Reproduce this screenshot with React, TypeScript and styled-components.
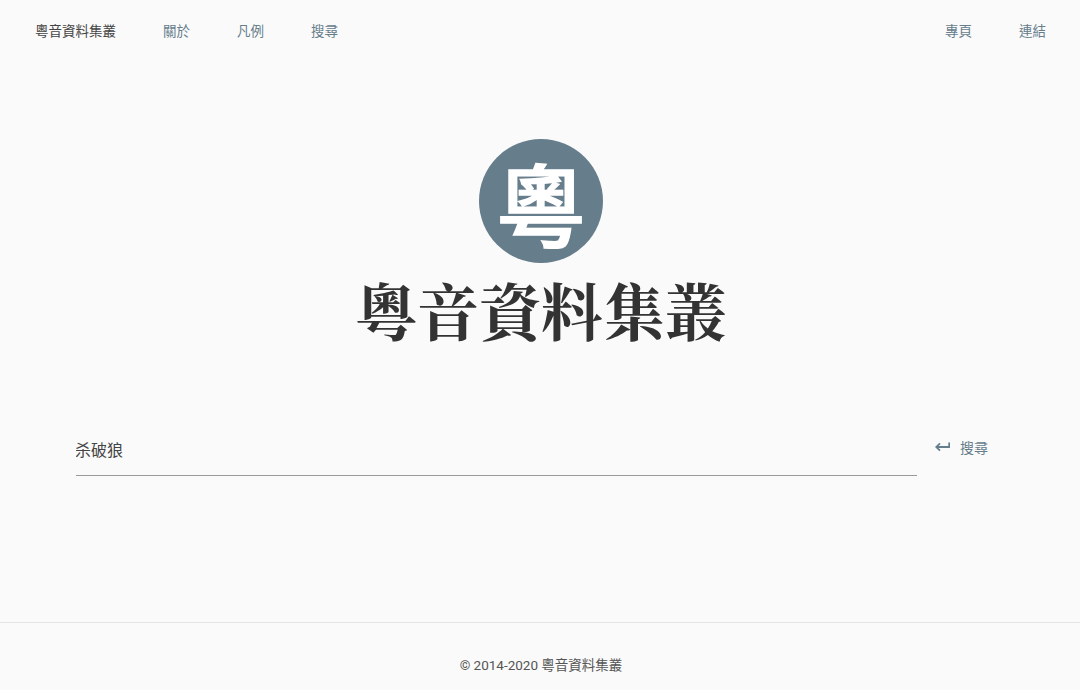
import React from 'react'
import styled, { createGlobalStyle } from 'styled-components'

const sans = `Roboto, "Noto Sans CJK TC", "Noto Sans CJK SC", sans-serif`

const GlobalStyle = createGlobalStyle`
  html, body {
    margin: 0;
    padding: 0;
    background: #fafafa;
    font-family: ${sans};
  }
`

const Page = styled.div`
  display: flex;
  flex-direction: column;
  height: 690px;
  overflow: hidden;
  background: #fafafa;
`

const Header = styled.header`
  display: flex;
  justify-content: space-between;
  align-items: center;
  height: 62px;
  padding: 0 34px 0 35px;
  font-size: 13.5px;
`

const NavGroup = styled.nav`
  display: flex;
  gap: 47px;
`

const NavLink = styled.a<{ $brand?: boolean }>`
  color: ${p => (p.$brand ? '#444' : '#667d8c')};
  line-height: 20px;
`

const Main = styled.main`
  flex: 1;
  display: flex;
  flex-direction: column;
  align-items: center;
  padding: 77px 0 0 2px;
`

const Logo = styled.div`
  width: 124px;
  height: 124px;
  border-radius: 50%;
  background: #667d8c;
  color: #fff;
  display: flex;
  align-items: center;
  justify-content: center;
  font-family: "Noto Sans CJK TC", sans-serif;
  font-size: 90px;
  font-weight: 500;
  line-height: 1;
  -webkit-text-stroke: 1.5px #fff;
`

const Title = styled.h1`
  margin: 11px 0 0;
  font-family: "Noto Serif CJK TC", "Liberation Serif", "Noto Sans CJK TC", serif;
  font-size: 62px;
  font-weight: 700;
  line-height: 72px;
  color: #333;
`

const SearchForm = styled.form`
  align-self: stretch;
  display: flex;
  align-items: flex-start;
  margin-top: 77px;
  padding: 0 92px 0 74px;
`

const SearchInput = styled.input`
  flex: 1;
  min-width: 0;
  height: 52px;
  padding: 0;
  border: 0;
  border-bottom: 1px solid #999;
  background: transparent;
  outline: none;
  font-family: ${sans};
  font-size: 16px;
  text-indent: -1px;
  color: #444;
`

const SearchButton = styled.button`
  display: flex;
  align-items: center;
  gap: 10px;
  height: 48px;
  margin-left: 18px;
  padding: 0;
  border: 0;
  background: none;
  color: #667d8c;
  font-family: ${sans};
  font-size: 14px;
`

const Footer = styled.footer`
  height: 68px;
  border-top: 1px solid #e4e4e4;
  display: flex;
  align-items: flex-end;
  justify-content: center;
  padding: 0 0 15px 2px;
  box-sizing: border-box;
  font-size: 13.5px;
  line-height: 20px;
  color: #555;
`

const ReturnIcon = () => (
  <svg width="15" height="10" viewBox="0 0 15 10" fill="none" stroke="#667d8c" strokeWidth="1.8">
    <path d="M14.2 0.5V5H1.5" />
    <path d="M5 1.4L1.2 5L5 8.6" />
  </svg>
)

export default function App() {
  return (
    <Page>
      <GlobalStyle />
      <Header>
        <NavGroup>
          <NavLink $brand>粵音資料集叢</NavLink>
          <NavLink>關於</NavLink>
          <NavLink>凡例</NavLink>
          <NavLink>搜尋</NavLink>
        </NavGroup>
        <NavGroup>
          <NavLink>專頁</NavLink>
          <NavLink>連結</NavLink>
        </NavGroup>
      </Header>
      <Main>
        <Logo>粵</Logo>
        <Title>粵音資料集叢</Title>
        <SearchForm onSubmit={e => e.preventDefault()}>
          <SearchInput defaultValue="杀破狼" />
          <SearchButton type="submit">
            <ReturnIcon />
            搜尋
          </SearchButton>
        </SearchForm>
      </Main>
      <Footer>© 2014-2020 粵音資料集叢</Footer>
    </Page>
  )
}
